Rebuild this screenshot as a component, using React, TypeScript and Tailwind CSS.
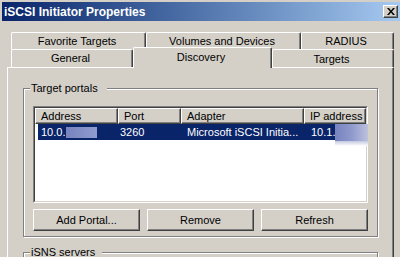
import React from "react";

const tabBase =
  "flex items-center justify-center pr-[3px] bg-[#d4d0c8] border-t border-l border-r border-t-white border-l-white border-r-[#404040] rounded-tl-[2px] rounded-tr-[2px] shadow-[inset_-1px_0_0_#808080]";

const btn =
  "w-[107px] h-[22px] flex items-center justify-center bg-[#d4d0c8] border border-t-white border-l-white border-r-[#404040] border-b-[#404040] shadow-[inset_-1px_-1px_0_#808080]";

const hcell =
  "h-full flex items-center pl-[5px] bg-[#d4d0c8] border border-t-white border-l-white border-r-[#404040] border-b-[#404040] shadow-[inset_-1px_-1px_0_#808080]";

const group =
  "relative w-[355px] border border-[#808080] shadow-[inset_1px_1px_0_#ffffff,1px_1px_0_#ffffff]";

export default function App() {
  return (
    <div className="w-[400px] h-[257px] overflow-hidden bg-[#d4d0c8] text-[11px] leading-none text-black font-['Liberation_Sans',Arial,sans-serif]">
      {/* Title bar */}
      <div className="pt-[2px] pl-[2px]">
        <div className="h-[19px] flex items-center pl-[2px] pr-[2px] bg-linear-to-r from-[#0a246a] to-[#a6caf0]">
          <span className="text-white font-bold text-[12px] leading-none">
            iSCSI Initiator Properties
          </span>
          <div className="ml-auto w-[15px] h-[13px] bg-[#d4d0c8] border border-t-white border-l-white border-r-[#404040] border-b-[#404040] shadow-[inset_-1px_-1px_0_#808080] flex items-center justify-center">
            <svg width="8" height="7" viewBox="0 0 8 7">
              <path
                d="M0 0h2l2 2.4L6 0h2L5 3.5 8 7H6L4 4.6 2 7H0l3-3.5z"
                fill="#000"
              />
            </svg>
          </div>
        </div>
      </div>

      {/* Body */}
      <div className="pl-[7px] pt-[11px]">
        {/* Tab row 1 */}
        <div className="flex pl-[4px] h-[17px]">
          <div className={tabBase + " w-[135px] h-[17px]"}>Favorite Targets</div>
          <div className={tabBase + " w-[155px] h-[17px]"}>Volumes and Devices</div>
          <div className={tabBase + " w-[93px] h-[17px]"}>RADIUS</div>
        </div>
        {/* Tab row 2 */}
        <div className="flex pl-[4px] h-[18px] items-end">
          <div className={tabBase + " w-[122px] h-[18px]"}>General</div>
          <div className={tabBase + " relative z-10 w-[139px] h-[21px] -mb-[1px] pb-[2px]"}>
            Discovery
          </div>
          <div className={tabBase + " w-[122px] h-[18px] pt-[1px]"}>Targets</div>
        </div>

        {/* Page */}
        <div className="w-[387px] h-[200px] border-t border-l border-r border-t-white border-l-white border-r-[#404040] shadow-[inset_-1px_0_0_#808080] pl-[15px] pt-[20px]">
          {/* Target portals group */}
          <div className={group + " pl-[9px] pt-[17px] pb-[5px]"}>
            <span className="absolute left-[6px] top-[-7px] bg-[#d4d0c8] pl-[1px] pr-[9px] leading-[13px]">
              Target portals
            </span>

            {/* List view */}
            <div className="w-[335px] h-[97px] border border-t-[#808080] border-l-[#808080] border-r-white border-b-white">
              <div className="relative h-full border border-t-[#404040] border-l-[#404040] border-r-[#d4d0c8] border-b-[#d4d0c8] bg-white">
                <div className="flex h-[16px]">
                  <div className={hcell + " w-[83px]"}>Address</div>
                  <div className={hcell + " w-[63px]"}>Port</div>
                  <div className={hcell + " w-[123px]"}>Adapter</div>
                  <div className={hcell + " w-[62px]"}>IP address</div>
                </div>
                <div className="flex ml-[3px] w-[328px] h-[16px] bg-[#0a246a] text-white">
                  <div className="w-[80px] flex items-center pl-[3px]">
                    <span>10.0.</span>
                    <span className="inline-block w-[31px] h-[11px] ml-[1px] bg-linear-to-r from-[#7683bd] to-[#909bd0]" />
                  </div>
                  <div className="w-[63px] flex items-center pl-[2px]">3260</div>
                  <div className="w-[123px] flex items-center pl-[6px] whitespace-nowrap">
                    Microsoft iSCSI Initia...
                  </div>
                  <div className="w-[62px] flex items-center pl-[7px]">10.1.</div>
                </div>
                {/* blurred tail of IP address */}
                <div className="absolute left-[300px] top-[16px] w-[33px]">
                  <div className="h-[17px] bg-linear-to-r from-[#7783bf] via-[#8f99cc] to-[#bcc1dc]" />
                  <div className="h-[5px] bg-linear-to-b from-[#c4c8de] to-white" />
                </div>
              </div>
            </div>

            {/* Buttons */}
            <div className="flex gap-[7px] mt-[6px]">
              <div className={btn}>Add Portal...</div>
              <div className={btn}>Remove</div>
              <div className={btn}>Refresh</div>
            </div>
          </div>

          {/* iSNS servers group */}
          <div className={group + " mt-[15px] h-[60px]"}>
            <span className="absolute left-[6px] top-[-7px] bg-[#d4d0c8] pl-[1px] pr-[7px] leading-[13px]">
              iSNS servers
            </span>
          </div>
        </div>
      </div>
    </div>
  );
}
